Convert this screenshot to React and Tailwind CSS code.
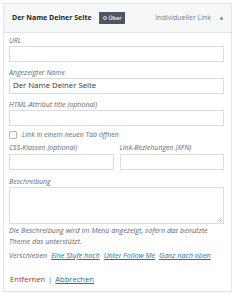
import React from 'react'

const Label = ({ children, className = '' }) => (
    <div className={`text-[7px] leading-[8px] italic text-[#646970] whitespace-nowrap ${className}`}>{children}</div>
)

const Field = ({ className = '', value }) => (
    <div className={`h-[16px] border border-[#dcdcde] bg-white flex items-center px-[3px] text-[7.8px] text-[#2c3338] ${className}`}>
        {value}
    </div>
)

export default function App() {
    return (
        <div className="w-[240px] h-[300px] bg-white pt-[3px] pl-[3px]" style={{ fontFamily: '"Open Sans", "Liberation Sans", sans-serif' }}>
            <div className="w-[229px] h-[289px] border border-[#e5e5e5] shadow-[0_1px_1px_rgba(0,0,0,0.04)] flex flex-col">
                {/* header */}
                <div className="h-[29px] bg-[#f6f7f7] border-b border-[#e5e5e5] flex items-center pl-[8px] pr-[7px]">
                    <span className="text-[7px] font-bold text-[#23282d]">Der Name Deiner Seite</span>
                    <span className="ml-[7px] h-[12px] w-[26px] px-[3px] flex items-center gap-[2px] bg-[#50575e] border-l border-[#2271b1] text-white text-[5.5px] font-semibold">
                        <span className="w-[4px] h-[4px] rounded-full border border-white/80 inline-block"></span>
                        Über
                    </span>
                    <span className="ml-auto text-[7px] text-[#787c82]">Individueller Link</span>
                    <svg className="ml-[8px]" width="5" height="4" viewBox="0 0 5 4">
                        <path d="M2.5 0.5L4.5 3.5H0.5Z" fill="#787c82" />
                    </svg>
                </div>

                {/* body */}
                <div className="flex-1 pl-[5px] pr-[7px] pt-[4px] flex flex-col">
                    <Label className="mb-[1px]">URL</Label>
                    <Field />

                    <Label className="mt-[7px] mb-[1px]">Angezeigter Name</Label>
                    <Field value="Der Name Deiner Seite" />

                    <Label className="mt-[7px] mb-[1px]">HTML-Attribut title (optional)</Label>
                    <Field />

                    <div className="mt-[5px] flex items-center gap-[5px]">
                        <span className="w-[8px] h-[8px] border border-[#b4b9be] rounded-[1px] bg-white"></span>
                        <Label>Link in einem neuen Tab öffnen</Label>
                    </div>

                    <div className="mt-[5px] grid grid-cols-2 gap-[6px]">
                        <div>
                            <Label className="mb-[2px]">CSS-Klassen (optional)</Label>
                            <Field />
                        </div>
                        <div>
                            <Label className="mb-[2px]">Link-Beziehungen (XFN)</Label>
                            <Field />
                        </div>
                    </div>

                    <Label className="mt-[8px] mb-[1px]">Beschreibung</Label>
                    <div className="relative h-[37px] border border-[#dcdcde] bg-white">
                        <svg className="absolute right-[1px] bottom-[1px]" width="5" height="5" viewBox="0 0 5 5">
                            <path d="M5 0L0 5M5 2L2 5M5 4L4 5" stroke="#a7aaad" strokeWidth="0.6" />
                        </svg>
                    </div>

                    <div className="mt-[1px] text-[7.2px] leading-[11px] italic text-[#646970]">
                        Die Beschreibung wird im Menü angezeigt, sofern das benutzte Theme das unterstützt.
                    </div>

                    <div className="mt-[3px] text-[7.2px] leading-[10px] italic flex gap-[4px] whitespace-nowrap">
                        <span className="text-[#646970]">Verschieben</span>
                        <span className="text-[#2271b1] underline">Eine Stufe hoch</span>
                        <span className="text-[#2271b1] underline">Unter Follow Me</span>
                        <span className="text-[#2271b1] underline">Ganz nach oben</span>
                    </div>

                    <div className="mt-[14px] text-[7.6px] leading-[10px] flex items-center gap-[3px] pl-[1px]">
                        <span className="text-[#b32d2e]">Entfernen</span>
                        <span className="text-[#646970]">|</span>
                        <span className="text-[#2271b1] underline">Abbrechen</span>
                    </div>
                </div>
            </div>
        </div>
    )
}
